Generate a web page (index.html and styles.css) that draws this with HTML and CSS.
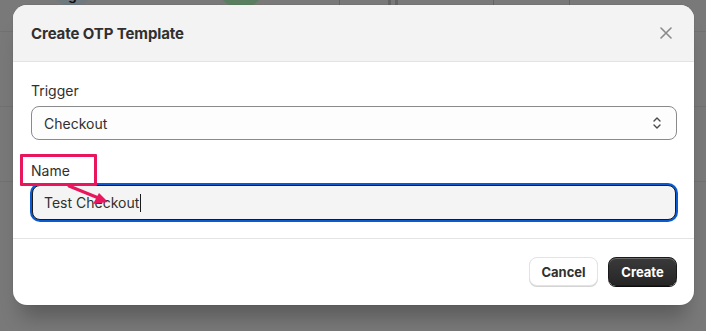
FILE: index.html
```html
<!DOCTYPE html>
<html>
<head>
<meta charset="utf-8">
<link rel="stylesheet" href="styles.css">
</head>
<body>
<div class="page">
  <div class="row row-top">
    <span class="avatar">g</span>
    <span class="badge"></span>
    <div class="actions">
      <span class="act">Edit</span>
      <span class="act">Deactivate</span>
      <span class="act act-danger">Delete</span>
    </div>
  </div>
  <div class="row row-mid"></div>
  <div class="row"></div>
</div>
<div class="overlay"></div>
<div class="modal">
  <div class="modal-header">
    <h2 class="modal-title">Create OTP Template</h2>
    <button class="close" aria-label="Close">
      <svg width="12" height="12" viewBox="0 0 12 12"><path d="M1 1L11 11M11 1L1 11" stroke="#8a8a8a" stroke-width="1.6" stroke-linecap="round"/></svg>
    </button>
  </div>
  <div class="modal-body">
    <div class="field">
      <label class="label">Trigger</label>
      <div class="select">
        <span>Checkout</span>
        <svg class="chev" width="10" height="16" viewBox="0 0 10 16"><path d="M2 6L5 3L8 6M2 10L5 13L8 10" fill="none" stroke="#4a4a4a" stroke-width="1.4" stroke-linecap="round" stroke-linejoin="round"/></svg>
      </div>
    </div>
    <div class="field field-name">
      <label class="label">Name</label>
      <div class="input"><span>Test Checkout</span><span class="caret"></span></div>
    </div>
  </div>
  <div class="modal-footer">
    <button class="btn btn-secondary">Cancel</button>
    <button class="btn btn-primary">Create</button>
  </div>
  <div class="annot-box"></div>
  <svg class="annot-arrow" width="50" height="24" viewBox="0 0 50 24"><path d="M2 2L34 15" stroke="#e8175d" stroke-width="3" stroke-linecap="round"/><path d="M41 18L26 20L32 9Z" fill="#e8175d"/></svg>
</div>
</body>
</html>
```
FILE: styles.css
```css
* { box-sizing: border-box; }
html, body { margin: 0; padding: 0; }
body {
  width: 706px;
  height: 331px;
  overflow: hidden;
  font-family: Inter, "Noto Sans", sans-serif;
  background: #f3f3f3;
  position: relative;
  color: #303030;
}
.page { display: flex; flex-direction: column; }
.row { border-bottom: 1px solid #e3e3e3; height: 75px; }
.row-top { height: 32px; display: flex; align-items: flex-start; }
.avatar {
  width: 51px; height: 51px; border-radius: 50%; flex: none;
  background: #dcf0ff; margin: -45px 0 0 47px;
  display: flex; justify-content: center; align-items: flex-end;
  font-size: 14px; line-height: 14px; font-weight: 600; color: #1a1a1a; padding-bottom: 4px;
}
.badge {
  width: 42px; height: 30px; border-radius: 15px; flex: none;
  background: #b4fec0; margin: -24px 0 0 122px;
}
.actions { display: flex; margin: -17px 0 0 77px; height: 22px; }
.act {
  font-size: 13px; line-height: 22px; text-align: center;
  border-left: 1px solid #c9c9c9; color: #303030;
}
.act:nth-child(1) { width: 49px; }
.act:nth-child(2) { width: 105px; border-left-width: 10px; border-left-style: double; }
.act:nth-child(3) { width: 77px; border-right: 1px solid #c9c9c9; }
.act-danger { color: #c70a24; }
.overlay { position: absolute; inset: 0; background: rgba(0,0,0,0.5); }

.modal {
  position: absolute; left: 13px; top: 5px; width: 681px; height: 300px;
  background: #fff; border-radius: 14px; overflow: hidden;
  display: flex; flex-direction: column;
  box-shadow: 0 20px 20px -8px rgba(0,0,0,0.25), 0 0 0 1px rgba(0,0,0,0.04);
}
.modal-header {
  height: 57px; background: #f3f3f3; border-bottom: 1px solid #e3e3e3;
  display: flex; align-items: center; justify-content: space-between;
  padding: 0 22px 0 18px;
}
.modal-title { margin: 0; font-size: 15px; font-weight: 650; color: #303030; letter-spacing: -0.1px; }
.close { background: none; border: 0; padding: 0; width: 12px; height: 12px; display: flex; }
.modal-body {
  padding: 19px 17px 0 18px; height: 177px; border-bottom: 1px solid #e3e3e3;
}
.field { display: flex; flex-direction: column; gap: 6px; }
.field-name { margin-top: 21px; gap: 5px; }
.label { font-size: 14px; line-height: 19px; color: #303030; }
.select {
  height: 34px; border: 1px solid #8a8a8a; border-radius: 8px; background: #fdfdfd;
  display: flex; align-items: center; justify-content: space-between;
  padding: 0 14px 0 12px; font-size: 14px; color: #303030;
}
.input {
  height: 35px; margin: 0 1px; border: 1px solid #1a1a1a; border-radius: 8px; background: #f4f4f4;
  box-shadow: 0 0 0 2px #0a5bd3;
  display: flex; align-items: center; padding: 0 11px; font-size: 14px; color: #303030;
}
.caret { width: 1px; height: 18px; background: #1a1a1a; margin-left: 1px; }
.modal-footer {
  flex: 1; display: flex; justify-content: flex-end; align-items: flex-start;
  gap: 10px; padding: 18px 17px 0 0;
}
.btn {
  height: 29px; width: 69px; border-radius: 8px; font-family: Inter, sans-serif;
  font-size: 13px; font-weight: 650; padding: 0;
}
.btn-secondary {
  background: #fff; color: #303030; border: 1px solid #e3e3e3;
  box-shadow: 0 1px 0 #d4d4d4;
}
.btn-primary {
  background: linear-gradient(#3a3a3a, #262626); color: #fff; border: 1px solid #1a1a1a;
  box-shadow: inset 0 1px 0 rgba(255,255,255,0.25), 0 1px 0 #0c0c0c;
}
.annot-box {
  position: absolute; left: 7px; top: 149px; width: 77px; height: 32px;
  border: 3px solid #e8175d; border-radius: 1px;
}
.annot-arrow { position: absolute; left: 54px; top: 179px; }
```
